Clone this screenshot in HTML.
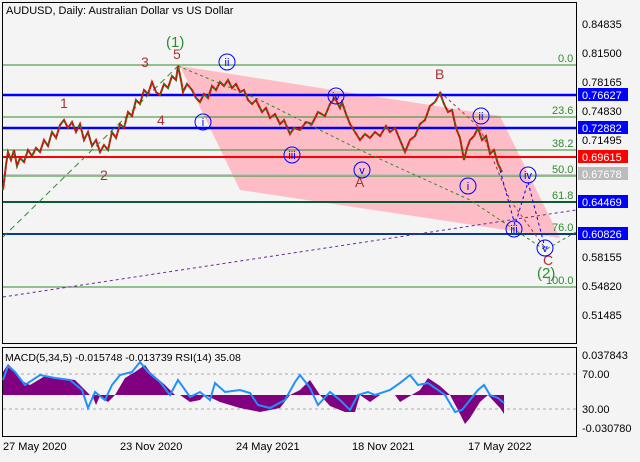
<!DOCTYPE html>
<html><head><style>
body{margin:0;background:#f4f4f4;width:640px;height:457px;overflow:hidden;font-family:"Liberation Sans",sans-serif}
svg text{font-family:"Liberation Sans",sans-serif}
</style></head><body>
<svg width="640" height="457" xmlns="http://www.w3.org/2000/svg" font-size="11">
<rect width="640" height="457" fill="#f4f4f4"/>
<rect x="2.5" y="2.5" width="574" height="341" fill="#f4f4f4" stroke="#000"/>
<rect x="2.5" y="347.5" width="574" height="89" fill="#f4f4f4" stroke="#000"/>
<polygon points="180,66 500,116 560,238 240,190" fill="#ffb6c1" opacity="0.9"/>
<g stroke="#2e8b2e" stroke-width="1">
<line x1="3" y1="65" x2="576" y2="65"/><line x1="3" y1="117" x2="576" y2="117"/>
<line x1="3" y1="150" x2="576" y2="150"/><line x1="3" y1="176" x2="576" y2="176"/>
<line x1="3" y1="287" x2="576" y2="287"/>
</g>
<line x1="3" y1="175" x2="576" y2="175" stroke="#bbb" stroke-width="1.5"/>
<line x1="3" y1="202" x2="576" y2="202" stroke="#0a5a3a" stroke-width="2"/>
<line x1="3" y1="234" x2="576" y2="234" stroke="#0a3a8a" stroke-width="2"/>
<line x1="3" y1="95" x2="576" y2="95" stroke="#0000ff" stroke-width="2.5"/>
<line x1="3" y1="128" x2="576" y2="128" stroke="#0000ff" stroke-width="2.5"/>
<line x1="3" y1="157" x2="576" y2="157" stroke="#ff0000" stroke-width="2"/>
<g font-size="11" fill="#2e8b2e">
<text x="558" y="62">0.0</text><text x="552" y="114">23.6</text><text x="552" y="147">38.2</text>
<text x="552" y="173">50.0</text><text x="552" y="199">61.8</text><text x="552" y="231">76.0</text><text x="546" y="284">100.0</text>
</g>
<line x1="3" y1="237" x2="178" y2="66" stroke="#2e8b2e" stroke-dasharray="6,4"/>
<line x1="3" y1="297" x2="576" y2="210" stroke="#6a2a9a" stroke-dasharray="3,3"/>
<polyline points="178,66 260,100 360,150 470,200 545,250 576,232" fill="none" stroke="#2e8b2e" stroke-dasharray="3,3"/>
<polyline points="440,92 480,128 510,200 545,248" fill="none" stroke="#b03030" stroke-dasharray="3,3"/>
<polyline points="500,170 515,225 528,182 545,248" fill="none" stroke="#0000ff" stroke-dasharray="3,3"/>
<polyline fill="none" stroke="#d01010" stroke-width="2" points="3,190 6,165 8,152 11,160 14,150 17,166 20,158 24,162 28,150 32,156 36,148 40,152 44,140 48,146 52,132 56,138 60,125 64,120 68,128 72,122 76,132 80,124 84,140 88,132 92,146 96,140 100,152 104,145 108,150 112,132 116,138 120,124 124,128 128,112 132,116 136,100 140,104 144,90 148,94 152,82 156,92 160,95 164,84 168,88 172,76 176,80 178,66 181,80 183,92 187,84 192,90 196,98 200,102 204,94 208,98 212,86 216,90 220,82 224,86 228,80 232,88 236,84 240,92 244,90 248,100 252,104 256,100 262,112 266,108 270,118 275,114 280,124 284,120 290,134 294,128 300,130 306,122 312,124 318,112 325,116 330,104 335,98 340,108 342,102 346,114 350,124 355,132 360,140 365,134 370,138 375,132 380,136 386,126 390,132 395,128 400,140 405,152 410,140 415,136 420,124 425,120 430,106 435,102 440,93 444,104 448,112 452,110 456,128 460,138 464,160 467,148 470,140 474,136 478,128 482,140 486,136 490,154 494,150 498,164 502,172"/>
<polyline fill="none" stroke="#109010" stroke-width="1.5" stroke-dasharray="2,4" points="3,190 6,165 8,152 11,160 14,150 17,166 20,158 24,162 28,150 32,156 36,148 40,152 44,140 48,146 52,132 56,138 60,125 64,120 68,128 72,122 76,132 80,124 84,140 88,132 92,146 96,140 100,152 104,145 108,150 112,132 116,138 120,124 124,128 128,112 132,116 136,100 140,104 144,90 148,94 152,82 156,92 160,95 164,84 168,88 172,76 176,80 178,66 181,80 183,92 187,84 192,90 196,98 200,102 204,94 208,98 212,86 216,90 220,82 224,86 228,80 232,88 236,84 240,92 244,90 248,100 252,104 256,100 262,112 266,108 270,118 275,114 280,124 284,120 290,134 294,128 300,130 306,122 312,124 318,112 325,116 330,104 335,98 340,108 342,102 346,114 350,124 355,132 360,140 365,134 370,138 375,132 380,136 386,126 390,132 395,128 400,140 405,152 410,140 415,136 420,124 425,120 430,106 435,102 440,93 444,104 448,112 452,110 456,128 460,138 464,160 467,148 470,140 474,136 478,128 482,140 486,136 490,154 494,150 498,164 502,172"/>
<g fill="#b03030" font-size="14">
<text x="60" y="108">1</text><text x="100" y="180">2</text><text x="141" y="67">3</text><text x="157" y="125">4</text><text x="173" y="59">5</text>
<text x="355" y="187">A</text><text x="435" y="79">B</text><text x="543" y="265">C</text>
</g>
<text x="166" y="47" fill="#2e8b2e" font-size="15">(1)</text>
<text x="537" y="278" fill="#2e8b2e" font-size="15">(2)</text>
<g fill="none" stroke="#0000ff"><circle cx="227" cy="62" r="8"/><circle cx="203" cy="122" r="8"/><circle cx="292" cy="155" r="8"/><circle cx="336" cy="96" r="8"/><circle cx="362" cy="170" r="8"/><circle cx="481" cy="116" r="8"/><circle cx="468" cy="186" r="8"/><circle cx="528" cy="175" r="8"/><circle cx="514" cy="229" r="8"/><circle cx="545" cy="248" r="8"/></g>
<g fill="#0000ff" font-size="11" text-anchor="middle"><text x="227" y="66">ii</text><text x="203" y="126">i</text><text x="292" y="159">iii</text><text x="336" y="100">iv</text><text x="362" y="174">v</text><text x="481" y="120">ii</text><text x="468" y="190">i</text><text x="528" y="179">iv</text><text x="514" y="233">iii</text><text x="545" y="252">v</text></g>
<text x="6" y="14" font-size="11" fill="#000">AUDUSD, Daily:  Australian Dollar vs US Dollar</text>
<g font-size="11" fill="#000">
<text x="582" y="28">0.84835</text><text x="582" y="57">0.81500</text><text x="582" y="86">0.78165</text>
<text x="582" y="115">0.74830</text><text x="582" y="144">0.71495</text><text x="582" y="290">0.54820</text><text x="582" y="319">0.51485</text><text x="582" y="261">0.58155</text>
</g>
<rect x="578" y="88" width="50" height="13" fill="#0000ff"/><text x="582" y="99" fill="#fff">0.76627</text>
<rect x="578" y="121" width="50" height="13" fill="#0000ff"/><text x="582" y="132" fill="#fff">0.72882</text>
<rect x="578" y="150" width="50" height="13" fill="#ff0000"/><text x="582" y="161" fill="#fff">0.69615</text>
<rect x="578" y="167" width="50" height="13" fill="#bbb"/><text x="582" y="178" fill="#fff">0.67678</text>
<rect x="578" y="195" width="50" height="13" fill="#0000ff"/><text x="582" y="206" fill="#fff">0.64469</text>
<rect x="578" y="227" width="50" height="13" fill="#0000ff"/><text x="582" y="238" fill="#fff">0.60826</text>
<line x1="3" y1="374" x2="576" y2="374" stroke="#aaa" stroke-dasharray="3,3"/>
<line x1="3" y1="409" x2="576" y2="409" stroke="#aaa" stroke-dasharray="3,3"/>
<polygon fill="#800080" points="3,395 3,372 8,364 14,370 20,380 30,385 45,376 60,378 75,380 85,390 90,395 92,395 96,405 100,396 108,402 115,395 125,378 135,372 145,365 150,372 165,385 175,395 180,395 190,402 200,400 205,395 220,402 240,408 260,412 280,408 290,395 300,390 310,380 320,395 330,406 345,412 355,412 360,395 370,402 380,395 395,395 400,402 420,390 428,378 440,386 450,395 458,410 465,424 470,418 480,402 488,395 500,408 504,414 504,395"/>
<polyline fill="none" stroke="#1e90ff" stroke-width="2" points="3,380 8,366 15,372 25,385 40,375 55,378 70,380 82,390 88,408 95,392 105,400 112,385 120,375 132,372 140,362 148,372 160,382 170,395 178,380 190,397 200,392 210,400 215,383 225,392 240,390 250,393 258,405 270,408 285,400 295,382 300,375 310,388 318,405 330,392 340,400 350,410 358,395 368,392 375,395 390,390 400,383 410,375 418,385 428,383 438,390 445,395 455,412 462,410 470,400 478,390 484,385 490,395 498,398 504,403"/>
<text x="5" y="361" font-size="10.5" fill="#000">MACD(5,34,5) -0.015748 -0.013739 RSI(14) 35.08</text>
<g font-size="11" fill="#000"><text x="582" y="359">0.037843</text><text x="582" y="378">70.00</text><text x="582" y="413">30.00</text><text x="582" y="432">-0.030780</text>
<text x="3" y="450">27 May 2020</text><text x="120" y="450">23 Nov 2020</text><text x="236" y="450">24 May 2021</text><text x="352" y="450">18 Nov 2021</text><text x="468" y="450">17 May 2022</text></g>
</svg>
</body></html>
